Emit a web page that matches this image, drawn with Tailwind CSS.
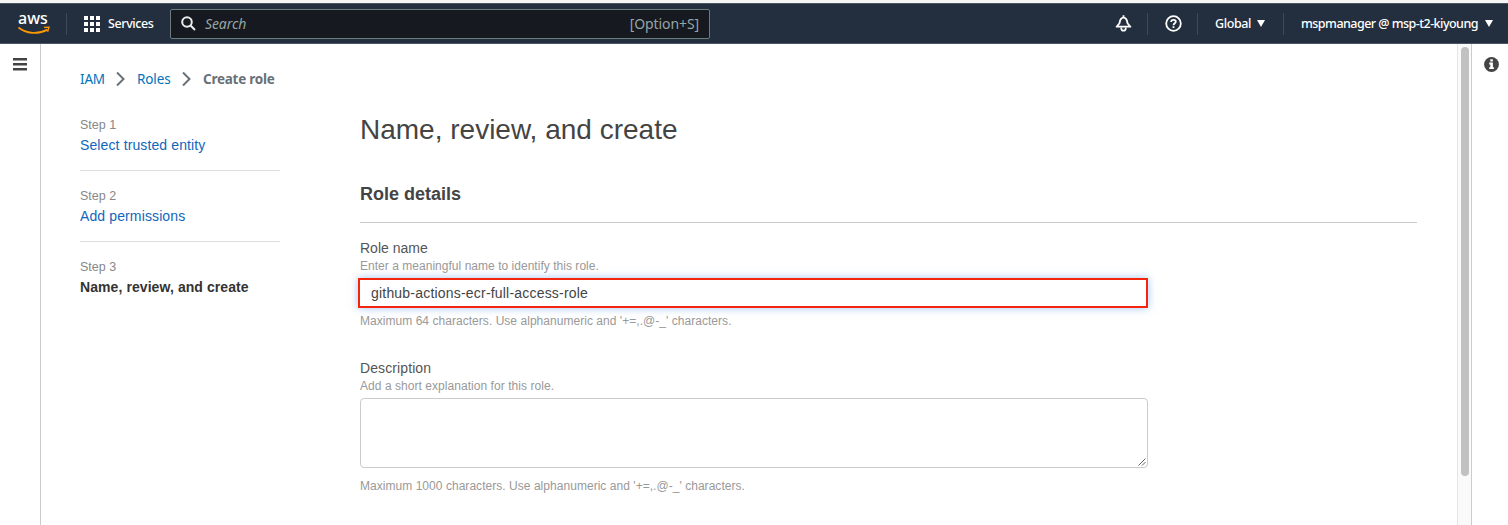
<!DOCTYPE html>
<html lang="en">
<head>
<meta charset="utf-8">
<title>Create role</title>
<script src="https://cdn.jsdelivr.net/npm/@tailwindcss/browser@4"></script>
</head>
<body class="h-[525px] overflow-hidden bg-white font-['Liberation_Sans',Arial,sans-serif] text-[#444]">
<div class="flex h-[525px] flex-col">
  <div class="h-[3px] shrink-0 bg-[#f5f5f5]"></div>
  <header class="flex h-[41px] shrink-0 items-center border-y border-[#4b5563] bg-[#232f3e] font-['Noto_Sans',sans-serif] text-[13px] font-medium text-white">
    <div class="ml-[18px] flex h-[39px] w-[48px] flex-col">
      <span class="mt-[4px] h-[18px] w-[30px] text-[16px] leading-[20px] font-medium">aws</span>
      <svg class="h-[9px] w-[33px]" viewBox="0 0 33 9"><path d="M.5 1.500C8 7.800 20 8.800 29.500 3.600" fill="none" stroke="#f90" stroke-width="1.800"/><path d="M26 1.300L31 1.100L29.600 5.800" fill="none" stroke="#f90" stroke-width="1.300"/></svg>
    </div>
    <div class="h-[22px] w-px bg-[#3e4957]"></div>
    <svg class="ml-[17px] h-4 w-4" viewBox="0 0 16 16" fill="#fff"><path d="M0 0h4v4H0zM6 0h4v4H6zM12 0h4v4h-4zM0 6h4v4H0zM6 6h4v4H6zM12 6h4v4h-4zM0 12h4v4H0zM6 12h4v4H6zM12 12h4v4h-4z"/></svg>
    <span class="ml-2 w-[62px] pt-[2px] text-[12.5px] whitespace-nowrap tracking-[-0.4px]">Services</span>
    <div class="flex h-[30px] w-[540px] items-center rounded-[2px] border border-[#6b7c7c] bg-[#16191f] text-[14px] font-normal text-[#95a5a6]">
      <svg class="ml-[10px] h-[15px] w-[15px]" viewBox="0 0 15 15" fill="none" stroke="#eaeded" stroke-width="2"><circle cx="6" cy="6" r="4.800"/><path d="M9.300 9.300L14 14"/></svg>
      <span class="ml-[9px] tracking-[-0.1px] italic">Search</span>
      <span class="mr-[10px] ml-auto tracking-[-0.1px]">[Option+S]</span>
    </div>
    <div class="ml-auto flex items-center">
      <svg class="mr-[15px] h-[17px] w-[17px]" viewBox="0 0 17 17" fill="none" stroke="#fff" stroke-width="1.800"><path d="M8.500 .3v2M1.600 11.700L4.500 8.200C5 4.500 6.300 2.700 8.500 2.700S12 4.500 12.500 8.200L15.400 11.700Z" stroke-linejoin="round"/><path d="M6.300 12.500v1a2.200 2.200 0 0 0 4.400 0v-1"/></svg>
      <div class="h-[22px] w-px bg-[#3e4957]"></div>
      <svg class="mr-[15px] ml-[17px] h-[17px] w-[17px]" viewBox="0 0 17 17" fill="none" stroke="#fff" stroke-width="1.800"><circle cx="8.500" cy="8.500" r="7.300"/><path d="M6.200 7V6.500C6.200 4.200 10.800 4.200 10.800 6.700C10.800 8.200 8.500 8.200 8.500 10.200M8.500 11.200v1.800"/></svg>
      <div class="h-[22px] w-px bg-[#3e4957]"></div>
      <span class="ml-[17px] w-[42px] pt-[2px] text-[12.5px] tracking-[-0.4px] whitespace-nowrap">Global</span>
      <svg class="mr-[18px] h-[7px] w-2" viewBox="0 0 8 7"><path d="M0 0h8L4 7z" fill="#fff"/></svg>
      <div class="h-[22px] w-px bg-[#3e4957]"></div>
      <span class="ml-[17px] w-[184px] pt-[2px] text-[12.5px] tracking-[-0.53px] whitespace-nowrap">mspmanager @ msp-t2-kiyoung</span>
      <svg class="mr-[15px] h-[7px] w-2" viewBox="0 0 8 7"><path d="M0 0h8L4 7z" fill="#fff"/></svg>
    </div>
  </header>
  <div class="flex min-h-0 flex-1">
    <aside class="w-[41px] shrink-0 border-r border-[#ccc] pt-[14px] pl-[13px]">
      <svg class="h-[13px] w-[14px]" viewBox="0 0 14 13" fill="#444"><path d="M0 0h14v2.400H0zM0 5h14v2.400H0zM0 10h14v2.400H0z"/></svg>
    </aside>
    <main class="flex min-w-0 flex-1 flex-col pl-[39px]">
      <nav class="mt-[25px] flex h-5 items-center font-['Noto_Sans',sans-serif] text-[13.5px] text-[#0073bb]">
        <a class="w-[36px] pt-px whitespace-nowrap tracking-[-0.2px]">IAM</a>
        <svg class="mr-[12px] h-[14px] w-[9px]" viewBox="0 0 9 14" fill="none" stroke="#687078" stroke-width="2"><path d="M1 .5L7.500 7L1 13.500"/></svg>
        <a class="w-[45px] pt-px whitespace-nowrap tracking-[-0.1px]">Roles</a>
        <svg class="mr-[12px] h-[14px] w-[9px]" viewBox="0 0 9 14" fill="none" stroke="#687078" stroke-width="2"><path d="M1 .5L7.500 7L1 13.500"/></svg>
        <span class="pt-px font-bold tracking-[-0.25px] text-[#687078]">Create role</span>
      </nav>
      <div class="flex">
        <ol class="mt-[26px] mr-[80px] w-[200px] text-[14px]">
          <li class="h-[56px] border-b border-[#ddd]"><p class="h-5 text-[12.5px] leading-[20px] text-[#888]">Step 1</p><a class="block leading-[20px] tracking-[0.12px] text-[#1166bb]">Select trusted entity</a></li>
          <li class="mt-[15px] h-[56px] border-b border-[#ddd]"><p class="h-5 text-[12.5px] leading-[21px] text-[#888]">Step 2</p><a class="block leading-[20px] tracking-[0.12px] text-[#1166bb]">Add permissions</a></li>
          <li class="mt-[15px]"><p class="h-5 text-[12.5px] leading-[21px] text-[#888]">Step 3</p><strong class="block leading-[21px] tracking-[0.08px] text-[#333]">Name, review, and create</strong></li>
        </ol>
        <section class="w-[1057px]">
          <h1 class="mt-[23px] h-[36px] text-[28px] leading-[36px] whitespace-nowrap">Name, review, and create</h1>
          <h2 class="mt-[34px] h-[41px] border-b border-[#ccc] text-[18px] leading-[24px] font-bold">Role details</h2>
          <div class="w-[788px]">
            <label class="mt-4 block h-[19px] text-[14px] leading-[19px] text-[#555]">Role name</label>
            <p class="h-[17px] text-[12px] leading-[17px] tracking-[0.03px] text-[#999]">Enter a meaningful name to identify this role.</p>
            <div class="mt-[3px] -ml-[2px] flex h-[30px] w-[790px] items-center border-2 border-[#f5240c] bg-white pl-[11px] text-[14px] tracking-[0.2px] shadow-[0_0_8px_rgba(70,140,230,0.5)]">github-actions-ecr-full-access-role</div>
            <p class="mt-[5px] h-[17px] text-[12px] leading-[17px] tracking-[0.04px] text-[#999]">Maximum 64 characters. Use alphanumeric and '+=,.@-_' characters.</p>
            <label class="mt-[29px] block h-[19px] text-[14px] leading-[19px] tracking-[0.1px] text-[#555]">Description</label>
            <p class="h-[17px] text-[12px] leading-[17px] tracking-[0.05px] text-[#999]">Add a short explanation for this role.</p>
            <div class="mt-[3px] flex h-[70px] items-end justify-end rounded-[4px] border border-[#ccc] bg-white pr-px pb-px">
              <svg class="h-[8px] w-[8px]" viewBox="0 0 8 8" fill="none" stroke="#666"><path d="M.5 7.500l7-7M4 7.500L7.500 4"/></svg>
            </div>
            <p class="mt-[10px] h-[17px] text-[12px] leading-[17px] tracking-[0.04px] text-[#999]">Maximum 1000 characters. Use alphanumeric and '+=,.@-_' characters.</p>
          </div>
        </section>
      </div>
    </main>
    <div class="w-[14px] shrink-0 border-l border-[#e5e5e5] bg-[#fafafa] pt-[3px] pl-[3px]"><div class="h-[429px] w-2 rounded-full bg-[#c1c1c1]"></div></div>
    <aside class="w-[37px] shrink-0 border-l border-[#ccc] pt-[13px] pl-[12px]">
      <svg class="h-[15px] w-[15px]" viewBox="0 0 15 15"><circle cx="7.500" cy="7.500" r="7.400" fill="#444"/><path d="M6.300 2.300h2.500v2.200H6.300zM5.200 5.600h3.700v4.700h1v1.800H5.200v-1.800h1.100V7.400H5.200z" fill="#fff"/></svg>
    </aside>
  </div>
</div>
</body>
</html>
